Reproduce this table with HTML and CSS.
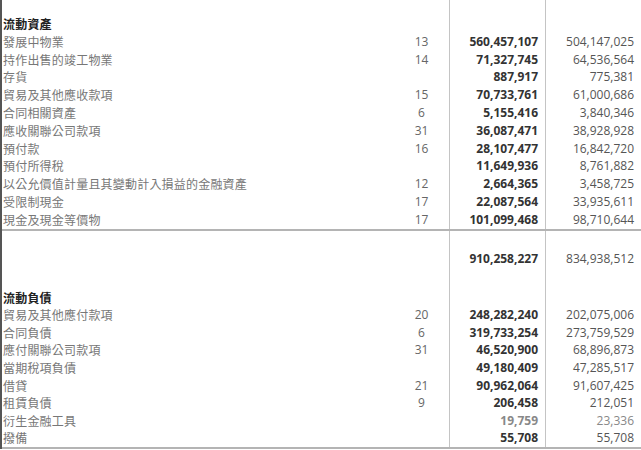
FILE: index.html
```html
<!DOCTYPE html>
<html lang="zh-Hant">
<head>
<meta charset="utf-8">
<link rel="stylesheet" href="styles.css">
</head>
<body>
<div class="sheet">
  <div class="row spacer top"><span></span><span></span><span class="c3"></span><span class="c4"></span></div>
  <section class="block a">
    <div class="row head"><span class="lbl">流動資產</span><span class="note"></span><span class="c3"></span><span class="c4"></span></div>
    <div class="row"><span class="lbl">發展中物業</span><span class="note">13</span><span class="c3">560,457,107</span><span class="c4">504,147,025</span></div>
    <div class="row"><span class="lbl">持作出售的竣工物業</span><span class="note">14</span><span class="c3">71,327,745</span><span class="c4">64,536,564</span></div>
    <div class="row"><span class="lbl">存貨</span><span class="note"></span><span class="c3">887,917</span><span class="c4">775,381</span></div>
    <div class="row"><span class="lbl">貿易及其他應收款項</span><span class="note">15</span><span class="c3">70,733,761</span><span class="c4">61,000,686</span></div>
    <div class="row"><span class="lbl">合同相關資產</span><span class="note">6</span><span class="c3">5,155,416</span><span class="c4">3,840,346</span></div>
    <div class="row"><span class="lbl">應收關聯公司款項</span><span class="note">31</span><span class="c3">36,087,471</span><span class="c4">38,928,928</span></div>
    <div class="row"><span class="lbl">預付款</span><span class="note">16</span><span class="c3">28,107,477</span><span class="c4">16,842,720</span></div>
    <div class="row"><span class="lbl">預付所得稅</span><span class="note"></span><span class="c3">11,649,936</span><span class="c4">8,761,882</span></div>
    <div class="row"><span class="lbl">以公允價值計量且其變動計入損益的金融資產</span><span class="note">12</span><span class="c3">2,664,365</span><span class="c4">3,458,725</span></div>
    <div class="row"><span class="lbl">受限制現金</span><span class="note">17</span><span class="c3">22,087,564</span><span class="c4">33,935,611</span></div>
    <div class="row"><span class="lbl">現金及現金等價物</span><span class="note">17</span><span class="c3">101,099,468</span><span class="c4">98,710,644</span></div>
  </section>
  <div class="row spacer gap1"><span></span><span></span><span class="c3"></span><span class="c4"></span></div>
  <div class="row total"><span class="lbl"></span><span class="note"></span><span class="c3">910,258,227</span><span class="c4">834,938,512</span></div>
  <div class="row spacer gap2"><span></span><span></span><span class="c3"></span><span class="c4"></span></div>
  <section class="block b">
    <div class="row head"><span class="lbl">流動負債</span><span class="note"></span><span class="c3"></span><span class="c4"></span></div>
    <div class="row"><span class="lbl">貿易及其他應付款項</span><span class="note">20</span><span class="c3">248,282,240</span><span class="c4">202,075,006</span></div>
    <div class="row"><span class="lbl">合同負債</span><span class="note">6</span><span class="c3">319,733,254</span><span class="c4">273,759,529</span></div>
    <div class="row"><span class="lbl">應付關聯公司款項</span><span class="note">31</span><span class="c3">46,520,900</span><span class="c4">68,896,873</span></div>
    <div class="row"><span class="lbl">當期稅項負債</span><span class="note"></span><span class="c3">49,180,409</span><span class="c4">47,285,517</span></div>
    <div class="row"><span class="lbl">借貸</span><span class="note">21</span><span class="c3">90,962,064</span><span class="c4">91,607,425</span></div>
    <div class="row"><span class="lbl">租賃負債</span><span class="note">9</span><span class="c3">206,458</span><span class="c4">212,051</span></div>
    <div class="row faded"><span class="lbl">衍生金融工具</span><span class="note"></span><span class="c3">19,759</span><span class="c4">23,336</span></div>
    <div class="row"><span class="lbl">撥備</span><span class="note"></span><span class="c3">55,708</span><span class="c4">55,708</span></div>
  </section>
</div>
</body>
</html>
```
FILE: styles.css
```css
html, body {
  margin: 0;
  padding: 0;
  background: #fff;
}
.sheet {
  width: 639px;
  border-left: 2px solid #555;
  font-family: "Open Sans", "Noto Sans CJK TC", sans-serif;
  font-size: 12px;
}
.row {
  display: grid;
  grid-template-columns: 392px 55px 96px 96px;
  align-items: stretch;
  height: 17.8px;
  line-height: 17.8px;
}
.row > span {
  white-space: nowrap;
  overflow: visible;
}
.block.b .row {
  height: 17.6px;
  line-height: 17.6px;
}
.block.a {
  border-bottom: 2px solid #b4b4b4;
}
.block.b {
  border-bottom: 2px solid #b4b4b4;
}
.spacer.top { height: 15px; }
.spacer.gap1 { height: 19px; }
.spacer.gap2 { height: 21px; }
.total { height: 18px; line-height: 18px; }
.lbl {
  font-family: "Noto Sans CJK TC", sans-serif;
  color: #777;
  letter-spacing: 0.2px;
  padding-left: 1px;
  font-size: 12px;
}
.head .lbl {
  color: #222;
  font-weight: 700;
}
.note {
  text-align: center;
  color: #666;
}
.c3, .c4 {
  border-left: 1px solid #c4c4c4;
  text-align: right;
  padding-right: 7px;
}
.c3 {
  font-weight: 700;
  color: #333;
}
.c4 {
  color: #555;
}
.faded .c3, .faded .c4 {
  color: #888;
}
```
